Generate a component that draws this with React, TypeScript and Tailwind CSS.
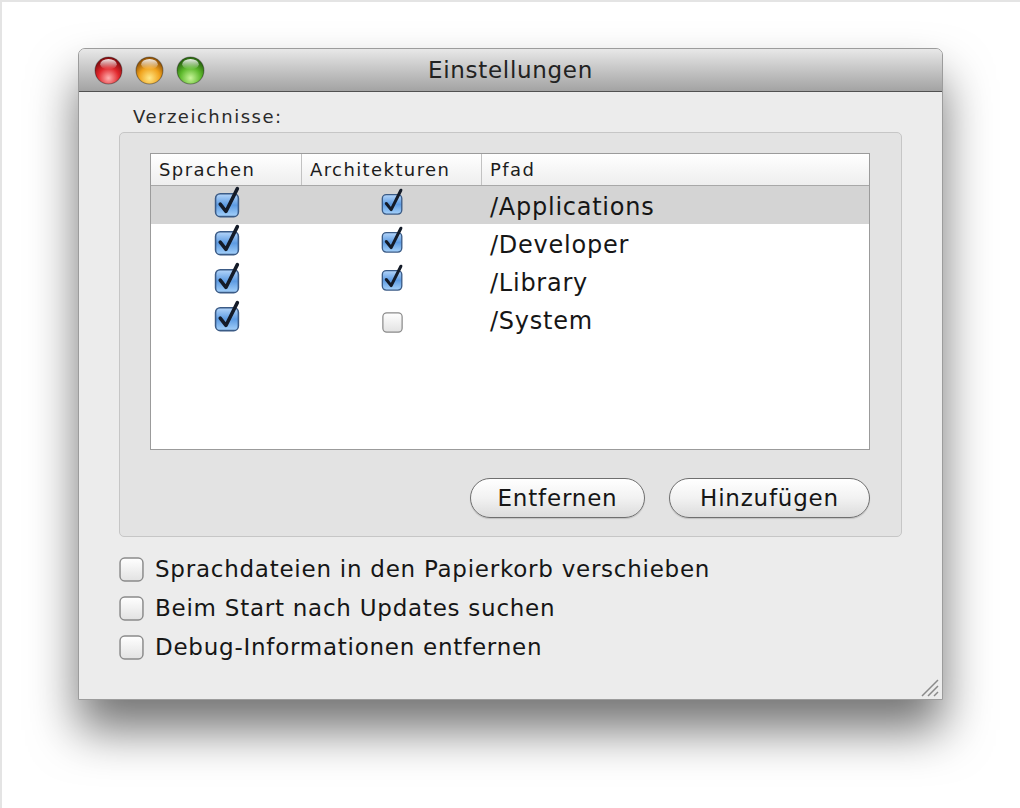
import { useId } from "react";

const ROWS = [
  { lang: true, arch: true, path: "/Applications", selected: true },
  { lang: true, arch: true, path: "/Developer", selected: false },
  { lang: true, arch: true, path: "/Library", selected: false },
  { lang: true, arch: false, path: "/System", selected: false },
];

const OPTIONS = [
  "Sprachdateien in den Papierkorb verschieben",
  "Beim Start nach Updates suchen",
  "Debug-Informationen entfernen",
];

// Aqua-style traffic light
function Light({ from, mid, to }: { from: string; mid: string; to: string }) {
  const id = useId();
  return (
    <svg width="29" height="29" viewBox="0 0 28 28">
      <defs>
        <radialGradient id={`${id}b`} cx="50%" cy="78%" r="65%">
          <stop offset="0%" stopColor={from} />
          <stop offset="60%" stopColor={mid} />
          <stop offset="100%" stopColor={to} />
        </radialGradient>
        <linearGradient id={`${id}h`} x1="0" y1="0" x2="0" y2="1">
          <stop offset="0%" stopColor="#fff" stopOpacity="0.9" />
          <stop offset="100%" stopColor="#fff" stopOpacity="0" />
        </linearGradient>
      </defs>
      <circle cx="14" cy="14" r="13" fill={`url(#${id}b)`} stroke="rgba(0,0,0,0.35)" strokeWidth="1" />
      <ellipse cx="14" cy="8" rx="8" ry="5" fill={`url(#${id}h)`} />
    </svg>
  );
}

function BlueCheck({ w }: { w: number }) {
  const id = useId();
  return (
    <svg width={w} height={(w * 31) / 26} viewBox="0 0 26 31">
      <defs>
        <linearGradient id={id} x1="0" y1="0" x2="0" y2="1">
          <stop offset="0%" stopColor="#b5d6fa" />
          <stop offset="50%" stopColor="#5d9be2" />
          <stop offset="100%" stopColor="#a6d2fb" />
        </linearGradient>
      </defs>
      <rect x="1.5" y="7.5" width="22" height="22" rx="4.5" fill={`url(#${id})`} stroke="#3b5b86" strokeWidth="1.5" />
      <path d="M6 17.5 L11.5 24.5 L22.5 2.5" fill="none" stroke="#141b28" strokeWidth="3.4" strokeLinecap="round" strokeLinejoin="round" />
    </svg>
  );
}

function EmptyCheck({ size }: { size: number }) {
  const id = useId();
  return (
    <svg width={size} height={size} viewBox="0 0 24 24">
      <defs>
        <linearGradient id={id} x1="0" y1="0" x2="0" y2="1">
          <stop offset="0%" stopColor="#ffffff" />
          <stop offset="100%" stopColor="#e2e2e2" />
        </linearGradient>
      </defs>
      <rect x="1" y="1" width="22" height="22" rx="4.5" fill={`url(#${id})`} stroke="#8a8a8a" strokeWidth="1.4" />
    </svg>
  );
}

function PillButton({ label, width }: { label: string; width: string }) {
  return (
    <button
      type="button"
      className={`${width} h-[40px] rounded-full border-[1.5px] border-[#6f6f6f] bg-linear-to-b from-[#ffffff] via-[#f2f2f2] to-[#dcdcdc] text-[23px] leading-none tracking-[0.8px] text-[#161616] shadow-[0_1px_1px_rgba(0,0,0,0.15)]`}
    >
      {label}
    </button>
  );
}

export default function App() {
  return (
    <div className="h-[808px] w-[1020px] overflow-hidden border-l-2 border-t-2 border-[#e4e4e4] bg-white pl-[76px] pt-[46px] font-['DejaVu_Sans',sans-serif] text-[#161616]">
      <div className="flex h-[652px] w-[865px] flex-col rounded-t-[7px] border border-[#9c9c9c] bg-[#ececec] shadow-[0_30px_48px_rgba(0,0,0,0.55)]">
        {/* title bar */}
        <div className="relative flex h-[43px] shrink-0 items-center rounded-t-[6px] border-b border-[#515151] bg-linear-to-b from-[#e8e8e8] to-[#a3a3a3] pl-[15px]">
          <div className="flex gap-[12px]">
            <Light from="#ffb0b0" mid="#e0262b" to="#8d0f12" />
            <Light from="#ffe98a" mid="#f0a21c" to="#9a5a08" />
            <Light from="#c9f59a" mid="#5cb82b" to="#2e6e12" />
          </div>
          <span className="absolute left-0 right-0 top-[10px] text-center text-[23px] leading-none tracking-[0.7px] text-[#222]">
            Einstellungen
          </span>
        </div>

        {/* body */}
        <div className="flex flex-1 flex-col px-[40px] pt-[15px]">
          <div className="pl-[14px] text-[18px] leading-[20px] tracking-[1.5px] text-[#2a2a2a]">Verzeichnisse:</div>

          <div className="mt-[5px] flex h-[405px] flex-col rounded-[5px] border border-[#c6c6c6] bg-[#e3e3e3] pl-[30px] pr-[31px] pt-[20px]">
            <div className="h-[297px] border border-[#9b9b9b] bg-white">
              <div className="flex h-[32px] border-b border-[#a8a8a8] bg-linear-to-b from-[#ffffff] to-[#eeeeee] text-[18px] leading-[32px] tracking-[1.4px] text-[#1c1c1c]">
                <div className="w-[151px] border-r border-[#c2c2c2] pl-[8px]">Sprachen</div>
                <div className="w-[180px] border-r border-[#c2c2c2] pl-[8px]">Architekturen</div>
                <div className="flex-1 pl-[8px]">Pfad</div>
              </div>
              {ROWS.map((r) => (
                <div key={r.path} className={`flex h-[38px] items-center ${r.selected ? "bg-[#d4d4d4]" : ""}`}>
                  <div className="flex w-[151px] justify-center pl-[2px]">
                    <div className="mt-[-5px]">{r.lang ? <BlueCheck w={27} /> : <EmptyCheck size={22} />}</div>
                  </div>
                  <div className="flex w-[180px] justify-center">
                    {r.arch ? (
                      <div className="mt-[-6px]"><BlueCheck w={23} /></div>
                    ) : (
                      <div className="mt-[6px]"><EmptyCheck size={21} /></div>
                    )}
                  </div>
                  <div className="flex-1 pl-[8px] pt-[4px] text-[24px] leading-none tracking-[0.75px]">{r.path}</div>
                </div>
              ))}
            </div>

            <div className="mt-[28px] flex justify-end gap-[24px]">
              <PillButton label="Entfernen" width="w-[175px]" />
              <PillButton label="Hinzufügen" width="w-[201px]" />
            </div>
          </div>

          <div className="mt-[18px] flex flex-col gap-[11px]">
            {OPTIONS.map((o) => (
              <div key={o} className="flex h-[28px] items-center gap-[11px] text-[23px] leading-none tracking-[0.75px]">
                <EmptyCheck size={25} />
                <span>{o}</span>
              </div>
            ))}
          </div>

          <div className="flex flex-1 items-end justify-end pb-[1px]">
            <svg width="24" height="24" viewBox="0 0 24 24" className="mr-[-38px]">
              <path d="M22 6 L6 22 M22 12 L12 22 M22 18 L18 22" stroke="#8a8a8a" strokeWidth="1.5" />
            </svg>
          </div>
        </div>
      </div>
    </div>
  );
}
